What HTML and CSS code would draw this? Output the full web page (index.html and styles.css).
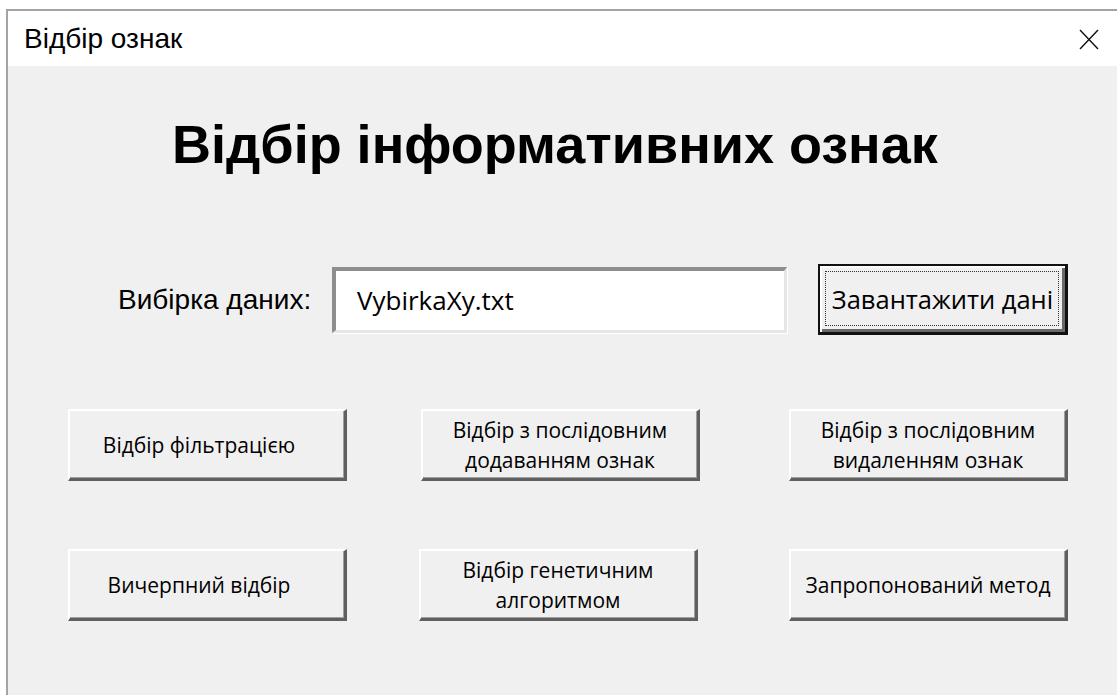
FILE: index.html
```html
<!DOCTYPE html>
<html lang="uk">
<head>
<meta charset="utf-8">
<title>Відбір ознак</title>
<link rel="stylesheet" href="styles.css">
</head>
<body>
<div class="window">
  <div class="titlebar">
    <span class="title">Відбір ознак</span>
    <svg class="close" width="20" height="21" viewBox="0 0 20 21" aria-hidden="true">
      <path d="M1 1 L19 20 M19 1 L1 20" stroke="#111" stroke-width="1.4" fill="none"/>
    </svg>
  </div>
  <div class="client">
    <h1 class="heading">Відбір інформативних ознак</h1>
    <div class="data-row">
      <span class="label">Вибірка даних:</span>
      <div class="textbox">VybirkaXy.txt</div>
      <button class="btn btn-default">Завантажити дані</button>
    </div>
    <div class="methods">
      <button class="btn method first">Відбір фільтрацією</button>
      <button class="btn method">Відбір з послідовним<br>додаванням ознак</button>
      <button class="btn method">Відбір з послідовним<br>видаленням ознак</button>
      <button class="btn method first">Вичерпний відбір</button>
      <button class="btn method shift">Відбір генетичним<br>алгоритмом</button>
      <button class="btn method">Запропонований метод</button>
    </div>
  </div>
</div>
</body>
</html>
```

FILE: styles.css
```css
html, body {
  margin: 0;
  padding: 0;
  background: #ffffff;
  overflow: hidden;
}

body {
  width: 1117px;
  height: 695px;
}

.window {
  box-sizing: border-box;
  width: calc(100% - 6px);
  height: 686px;
  margin: 9px 0 0 6px;
  border-left: 2px solid #a3a3a3;
  border-top: 2px solid #a3a3a3;
  display: flex;
  flex-direction: column;
}

.titlebar {
  height: 55px;
  background: #ffffff;
  display: flex;
  align-items: center;
  justify-content: space-between;
  padding: 0 18px 0 16px;
}

.title {
  font-family: "Liberation Sans", Arial, sans-serif;
  font-size: 28px;
  color: #000;
}

.close {
  display: block;
  margin-top: 2px;
}

.client {
  flex: 1;
  background: #f0f0f0;
  display: flex;
  flex-direction: column;
}

.heading {
  margin: 47px 0 0 0;
  padding-left: 164px;
  font-family: "Liberation Sans", Arial, sans-serif;
  font-weight: bold;
  font-size: 54px;
  line-height: 62px;
  color: #000;
}

.data-row {
  display: flex;
  align-items: center;
  margin-top: 89px;
  padding-left: 110px;
  height: 71px;
}

.label {
  font-family: "Liberation Sans", Arial, sans-serif;
  font-size: 28px;
  color: #000;
  width: 214px;
}

.textbox {
  box-sizing: border-box;
  width: 455px;
  height: 66px;
  background: #fff;
  border-top: 4px solid #8e8e8e;
  border-left: 4px solid #8e8e8e;
  border-bottom: 3px solid #e6e6e6;
  border-right: 3px solid #e6e6e6;
  box-shadow: 1px 1px 0 #ffffff;
  padding-left: 21px;
  display: flex;
  align-items: center;
  font-family: "Open Sans", "Noto Sans", sans-serif;
  font-size: 26px;
  color: #000;
}

.btn {
  box-sizing: border-box;
  background: #f0f0f0;
  color: #000;
  font-family: "Open Sans", "Noto Sans", sans-serif;
  font-size: 21px;
  line-height: 30px;
  padding: 0;
  margin: 0;
  border-style: solid;
  border-width: 2px 3px 3px 2px;
  border-color: #ffffff #5f5f5f #5f5f5f #ffffff;
  box-shadow: inset -1px -1px 0 #a0a0a0;
  text-align: center;
  position: relative;
}

.btn-default {
  width: 250px;
  height: 71px;
  margin-left: 31px;
  font-size: 25.5px;
  border: 2px solid #111;
  border-right-width: 3px;
  border-bottom-width: 3px;
  box-shadow: inset 2px 2px 0 #ffffff, inset -3px -3px 0 #6a6a6a;
}

.btn-default::after {
  content: "";
  position: absolute;
  inset: 5px 6px 6px 5px;
  border: 1px dotted #333;
}

.methods {
  display: grid;
  grid-template-columns: 353px 368px 279px;
  grid-auto-rows: 72px;
  row-gap: 68px;
  margin-top: 74px;
  padding-left: 60px;
}

.method {
  width: 279px;
  height: 72px;
}

.first {
  padding-right: 16px;
}

.shift {
  margin-left: -2px;
}
```
